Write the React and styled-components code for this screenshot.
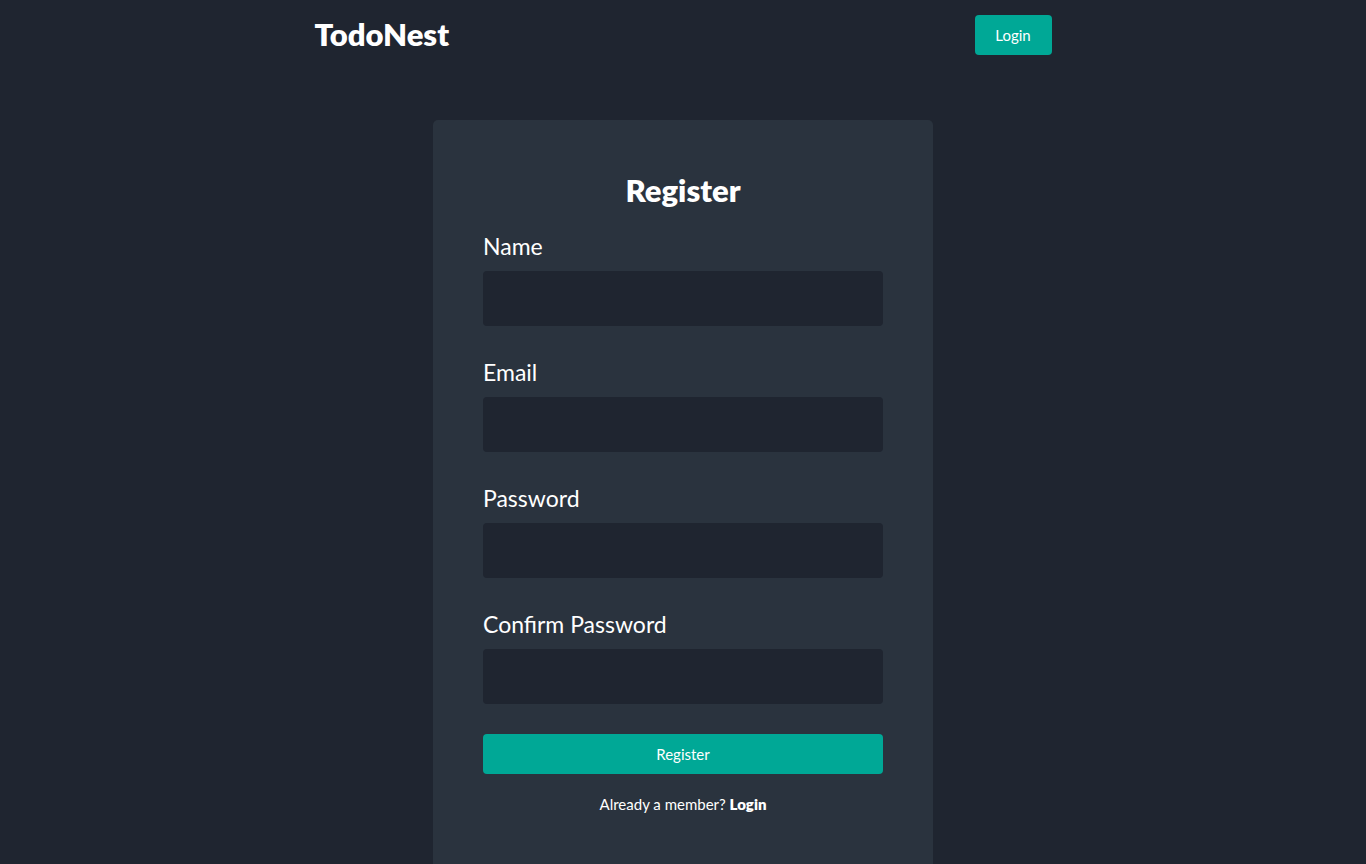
import React, { useState } from 'react';
import styled, { createGlobalStyle } from 'styled-components';

const GlobalStyle = createGlobalStyle`
  * { box-sizing: border-box; }
  body {
    margin: 0;
    background: #1f2530;
    color: #fff;
    font-family: Lato, "Open Sans", sans-serif;
  }
`;

const fields = [
  { name: 'name', type: 'text', label: 'Name' },
  { name: 'email', type: 'email', label: 'Email' },
  { name: 'password', type: 'password', label: 'Password' },
  { name: 'confirmPassword', type: 'password', label: 'Confirm Password' },
];

const App = () => {
  const [form, setForm] = useState({});

  const handleChange = (e) => {
    const { name, value } = e.target;
    setForm(prev => ({ ...prev, [name]: value }));
  };

  const handleSubmit = (e) => {
    e.preventDefault();
  };

  return (
    <Page>
      <GlobalStyle />
      <Nav>
        <Logo>TodoNest</Logo>
        <NavButton>Login</NavButton>
      </Nav>

      <Card onSubmit={handleSubmit}>
        <Title>Register</Title>
        <Fields>
          {fields.map((f) => (
            <Field key={f.name}>
              <Label htmlFor={f.name}>{f.label}</Label>
              <Input
                id={f.name}
                name={f.name}
                type={f.type}
                value={form[f.name] || ''}
                onChange={handleChange}
              />
            </Field>
          ))}
        </Fields>
        <SubmitButton type="submit">Register</SubmitButton>
        <Footer>
          Already a member? <strong>Login</strong>
        </Footer>
      </Card>
    </Page>
  );
};

const Page = styled.div`
  min-height: 100vh;
  display: flex;
  flex-direction: column;
  align-items: center;
`;

const Nav = styled.nav`
  width: 737px;
  height: 70px;
  display: flex;
  justify-content: space-between;
  align-items: center;
`;

const Logo = styled.h1`
  margin: 0 0 2px;
  font-size: 31px;
  font-weight: 800;
  color: #fff;
`;

const NavButton = styled.button`
  width: 77px;
  height: 40px;
  border: none;
  border-radius: 4px;
  background: #00a896;
  color: #fff;
  font-family: inherit;
  font-size: 15px;
  cursor: pointer;
`;

const Card = styled.form`
  width: 500px;
  margin-top: 50px;
  padding: 50px 50px 70px;
  background: #2a333e;
  border-radius: 5px;
  display: flex;
  flex-direction: column;
`;

const Title = styled.h2`
  margin: 0 0 21px;
  text-align: center;
  font-size: 31px;
  font-weight: 800;
  line-height: 40px;
`;

const Fields = styled.div`
  display: flex;
  flex-direction: column;
  gap: 31px;
  margin-bottom: 30px;
`;

const Field = styled.div`
  display: flex;
  flex-direction: column;
`;

const Label = styled.label`
  font-size: 23px;
  line-height: 30px;
  margin-bottom: 10px;
`;

const Input = styled.input`
  height: 55px;
  border: none;
  border-radius: 4px;
  background: #1f2530;
  color: #fff;
  padding: 0 14px;
  font-family: inherit;
  font-size: 18px;
  outline: none;
`;

const SubmitButton = styled.button`
  height: 40px;
  border: none;
  border-radius: 4px;
  background: #00a896;
  color: #fff;
  font-family: inherit;
  font-size: 15px;
  cursor: pointer;
`;

const Footer = styled.p`
  margin: 20px 0 0;
  text-align: center;
  font-size: 15px;
  line-height: 20px;

  strong {
    font-weight: 800;
  }
`;

export default App;
